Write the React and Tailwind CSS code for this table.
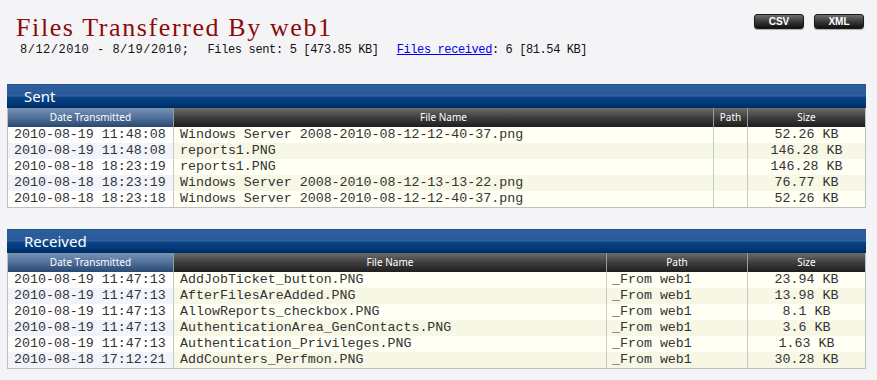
import React from 'react';

const sentRows = [
  ['2010-08-19 11:48:08', 'Windows Server 2008-2010-08-12-12-40-37.png', '', '52.26 KB'],
  ['2010-08-19 11:48:08', 'reports1.PNG', '', '146.28 KB'],
  ['2010-08-18 18:23:19', 'reports1.PNG', '', '146.28 KB'],
  ['2010-08-18 18:23:19', 'Windows Server 2008-2010-08-12-13-13-22.png', '', '76.77 KB'],
  ['2010-08-18 18:23:18', 'Windows Server 2008-2010-08-12-12-40-37.png', '', '52.26 KB'],
];

const receivedRows = [
  ['2010-08-19 11:47:13', 'AddJobTicket_button.PNG', '_From web1', '23.94 KB'],
  ['2010-08-19 11:47:13', 'AfterFilesAreAdded.PNG', '_From web1', '13.98 KB'],
  ['2010-08-19 11:47:13', 'AllowReports_checkbox.PNG', '_From web1', '8.1 KB'],
  ['2010-08-19 11:47:13', 'AuthenticationArea_GenContacts.PNG', '_From web1', '3.6 KB'],
  ['2010-08-19 11:47:13', 'Authentication_Privileges.PNG', '_From web1', '1.63 KB'],
  ['2010-08-18 17:12:21', 'AddCounters_Perfmon.PNG', '_From web1', '30.28 KB'],
];

function Button({ label }) {
  return (
    <button className="w-[50px] h-[15px] rounded-[3px] border border-[#1a1a1a] bg-[linear-gradient(to_bottom,#6e6e6e_0%,#3a3a3a_50%,#111111_100%)] text-white text-[10px] leading-[13px] font-bold shadow-[0_1px_1px_rgba(0,0,0,0.3)] font-['Liberation_Sans',sans-serif]">
      {label}
    </button>
  );
}

function Section({ title, rows, nameW, pathW, pathClass }) {
  return (
    <div className="w-[859px]">
      {/* section bar */}
      <div className="h-[24px] pl-[17px] flex items-center bg-[linear-gradient(to_bottom,#1f4f8c_0%,#2c5e9b_6%,#2a5b98_46%,#3766a2_50%,#0b4385_54%,#023a7a_80%,#002a60_100%)] text-white text-[15px] font-['Noto_Sans',sans-serif]">
        {title}
      </div>
      <div className="border border-t-0 border-[#c0c0c0] font-['Noto_Sans',sans-serif]">
        {/* column headings */}
        <div className="flex h-[19px] text-[10px] leading-[19px] text-white text-center">
          <div className="w-[165px] bg-[linear-gradient(to_bottom,#7894b6_0%,#50709a_50%,#284870_100%)]">Date Transmitted</div>
          <div className="flex flex-1 bg-[linear-gradient(to_bottom,#6c6c6c_0%,#3e3e3e_50%,#1e1e1e_100%)]">
            <div className="border-l border-[#9a9a9a]" style={{ width: nameW }}>File Name</div>
            <div className="border-l border-[#9a9a9a]" style={{ width: pathW }}>Path</div>
            <div className="flex-1 border-l border-[#9a9a9a]">Size</div>
          </div>
        </div>
        {/* data */}
        {rows.map((r, i) => (
          <div key={i} className={`flex h-[16px] leading-[16px] text-[13.3px] text-[#333] font-['Liberation_Mono',monospace] whitespace-nowrap ${i % 2 ? 'bg-[#f7f7e6]' : 'bg-[#fffff4]'}`}>
            <div className={`w-[165px] pl-[6px] ${i % 2 ? 'bg-[#f1f4fa]' : 'bg-white'}`}>{r[0]}</div>
            <div className="border-l border-[#c8c8c8] pl-[6px] overflow-hidden" style={{ width: nameW }}>{r[1]}</div>
            <div className={`border-l border-[#c8c8c8] ${pathClass}`} style={{ width: pathW }}>{r[2]}</div>
            <div className="flex-1 border-l border-[#c8c8c8] text-center">{r[3]}</div>
          </div>
        ))}
      </div>
    </div>
  );
}

export default function App() {
  return (
    <div className="w-[877px] h-[380px] bg-[#f4f4f6] px-[7px] pt-[13px] overflow-hidden">
      <div className="flex justify-between items-start">
        <div className="pl-[9px]">
          <h1 className="text-[26px] leading-[30px] tracking-[1.6px] text-[#8b0a0a] font-['Liberation_Serif',serif]">
            Files Transferred By web1
          </h1>
          <div className="pl-[4px] flex text-[12px] leading-[14px] text-[#111] font-['Liberation_Mono',monospace] whitespace-nowrap">
            <span className="tracking-[0.5px]">8/12/2010 - 8/19/2010;</span>
            <span className="ml-[18px] tracking-[-0.35px]">Files sent: 5 [473.85 KB]</span>
            <span className="ml-[18px] tracking-[-0.4px]">
              <a href="#" className="text-[#0000ee] underline">Files received</a>: 6 [81.54 KB]
            </span>
          </div>
        </div>
        <div className="flex gap-[10px] mt-[1px] pr-[6px]">
          <Button label="CSV" />
          <Button label="XML" />
        </div>
      </div>

      <div className="mt-[27px]">
        <Section title="Sent" rows={sentRows} nameW={540} pathW={34} pathClass="" />
      </div>
      <div className="mt-[21px]">
        <Section title="Received" rows={receivedRows} nameW={433} pathW={141} pathClass="pl-[5px]" />
      </div>
    </div>
  );
}
